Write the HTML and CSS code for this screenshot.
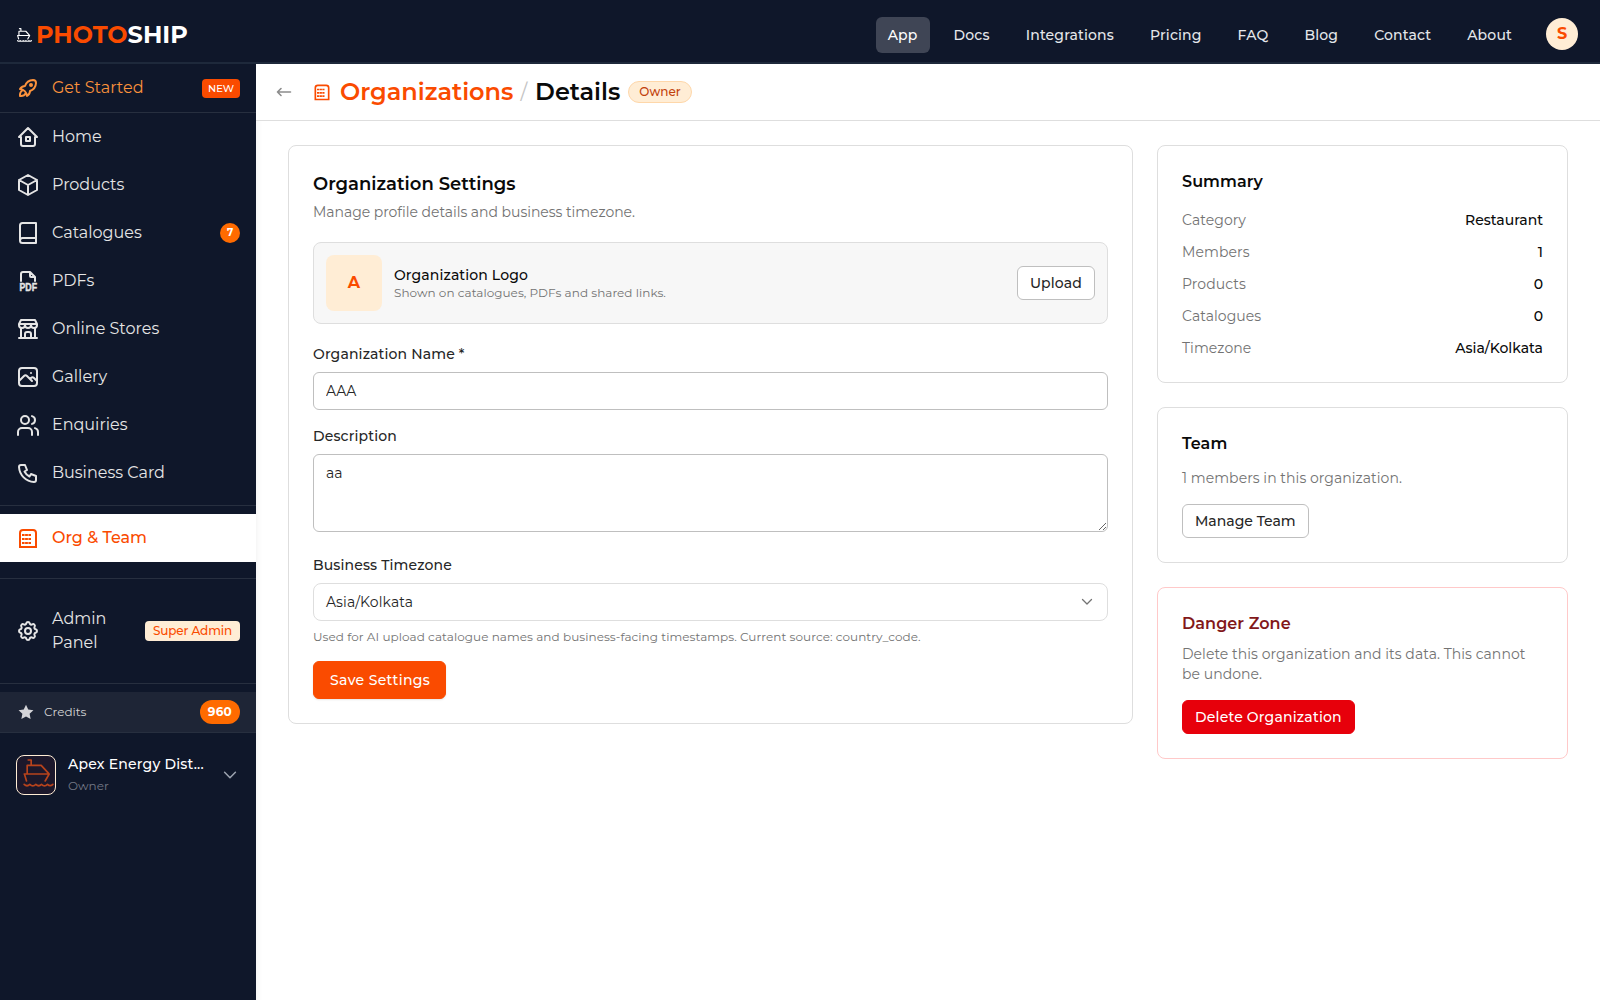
FILE: index.html
```html
<!DOCTYPE html>
<html lang="en">
<head>
    <meta charset="UTF-8">
    <meta name="viewport" content="width=device-width, initial-scale=1.0">
    <title>Organization Details - Photoship</title>
    <link rel="stylesheet" href="styles.css">
</head>
<body>
    <svg class="symbols" width="0" height="0">
        <symbol id="ship" viewBox="0 0 92 84">
            <path d="M15 3h9v16M12 44V19h42l23 25M3 45h75l-12 21M4 46l6 20M3 76c6 6 11 6 17 0 6 6 12 6 18 0 6 6 11 6 17 0 6 6 12 6 18 0 6 6 10 6 16 0"/>
        </symbol>
        <symbol id="building" viewBox="0 0 24 24">
            <path d="M3 21h18M4 21V7a3 3 0 0 1 3-3h10a3 3 0 0 1 3 3v14M6 9h2.600m.5 0h2.800m.5 0H15M6 13h2.600m.5 0h2.800m.5 0H15M6 17h2.600m.5 0h2.800m.5 0H15"/>
        </symbol>
    </svg>

    <header class="topbar">
        <a class="brand">
            <svg class="brand-icon"><use href="#ship"/></svg>
            <span class="brand-name"><span>PHOTO</span>SHIP</span>
        </a>
        <nav class="topnav">
            <a class="active">App</a>
            <a>Docs</a>
            <a>Integrations</a>
            <a>Pricing</a>
            <a>FAQ</a>
            <a>Blog</a>
            <a>Contact</a>
            <a>About</a>
        </nav>
        <div class="avatar">S</div>
    </header>

    <div class="layout">
        <aside class="sidebar">
            <a class="nav-item get-started">
                <svg class="icon" viewBox="0 0 24 24"><path d="M4 13a8 8 0 0 1 7 7 6 6 0 0 0 3-5 9 9 0 0 0 6-8 3 3 0 0 0-3-3 9 9 0 0 0-8 6 6 6 0 0 0-5 3M7 14a6 6 0 0 0-3 6 6 6 0 0 0 6-3"/><circle cx="15" cy="9" r="1"/></svg>
                <span>Get Started</span>
                <span class="tag-new">NEW</span>
            </a>
            <nav class="nav-main">
                <a class="nav-item">
                    <svg class="icon" viewBox="0 0 24 24"><path d="M5 12H3l9-9 9 9h-2M5 12v7a2 2 0 0 0 2 2h10a2 2 0 0 0 2-2v-7M10 12h4v4h-4z"/></svg>
                    <span>Home</span>
                </a>
                <a class="nav-item">
                    <svg class="icon" viewBox="0 0 24 24"><path d="M12 2 21 7v10l-9 5-9-5V7zM3 7l9 5 9-5M12 12v10"/></svg>
                    <span>Products</span>
                </a>
                <a class="nav-item">
                    <svg class="icon" viewBox="0 0 24 24"><path d="M4 19.500V4.500A2.500 2.500 0 0 1 6.500 2H20v20H6.500a2.500 2.500 0 0 1 0-5H20"/></svg>
                    <span>Catalogues</span>
                    <span class="count">7</span>
                </a>
                <a class="nav-item">
                    <svg class="icon" viewBox="0 0 24 24"><path d="M14 3v4a1 1 0 0 0 1 1h4M5 12V5a2 2 0 0 1 2-2h7l5 5v4"/><text x="3.500" y="22" textLength="17.500" lengthAdjust="spacingAndGlyphs">PDF</text></svg>
                    <span>PDFs</span>
                </a>
                <a class="nav-item">
                    <svg class="icon" viewBox="0 0 24 24"><path d="M3 21h18M3 7v1a3 3 0 0 0 6 0V7m0 1a3 3 0 0 0 6 0V7m0 1a3 3 0 0 0 6 0V7H3l2-4h14l2 4M5 21V10.850M19 21V10.850M9 21v-4a2 2 0 0 1 2-2h2a2 2 0 0 1 2 2v4"/></svg>
                    <span>Online Stores</span>
                </a>
                <a class="nav-item">
                    <svg class="icon" viewBox="0 0 24 24"><path d="M15 8h.010M3 6a3 3 0 0 1 3-3h12a3 3 0 0 1 3 3v12a3 3 0 0 1-3 3H6a3 3 0 0 1-3-3zM3 16l5-5c.928-.893 2.072-.893 3 0l5 5M14 14l1-1c.928-.893 2.072-.893 3 0l3 3"/></svg>
                    <span>Gallery</span>
                </a>
                <a class="nav-item">
                    <svg class="icon" viewBox="0 0 24 24"><path d="M16 22v-3a4 4 0 0 0-4-4H6a4 4 0 0 0-4 4v3M22 22v-3a4 4 0 0 0-3-3.870M16 3.130a4 4 0 0 1 0 7.750"/><circle cx="9" cy="7" r="4"/></svg>
                    <span>Enquiries</span>
                </a>
                <a class="nav-item">
                    <svg class="icon" viewBox="0 0 24 24"><path d="M5 4h4l2 5-2.500 1.500a11 11 0 0 0 5 5L15 13l5 2v4a2 2 0 0 1-2 2A16 16 0 0 1 3 6a2 2 0 0 1 2-2"/></svg>
                    <span>Business Card</span>
                </a>
            </nav>
            <nav class="nav-org">
                <a class="nav-item active">
                    <svg class="icon"><use href="#building"/></svg>
                    <span>Org &amp; Team</span>
                </a>
            </nav>
            <div class="nav-admin">
                <a class="nav-item">
                    <svg class="icon" viewBox="0 0 24 24"><path d="M10.325 4.317c.426-1.756 2.924-1.756 3.350 0a1.724 1.724 0 0 0 2.573 1.066c1.543-.940 3.310.826 2.370 2.370a1.724 1.724 0 0 0 1.065 2.572c1.756.426 1.756 2.924 0 3.350a1.724 1.724 0 0 0-1.066 2.573c.940 1.543-.826 3.310-2.370 2.370a1.724 1.724 0 0 0-2.572 1.065c-.426 1.756-2.924 1.756-3.350 0a1.724 1.724 0 0 0-2.573-1.066c-1.543.940-3.310-.826-2.370-2.370a1.724 1.724 0 0 0-1.065-2.572c-1.756-.426-1.756-2.924 0-3.350a1.724 1.724 0 0 0 1.066-2.573c-.940-1.543.826-3.310 2.370-2.370 1 .608 2.296.070 2.572-1.065z"/><circle cx="12" cy="12" r="3"/></svg>
                    <span>Admin Panel</span>
                    <span class="tag-admin">Super Admin</span>
                </a>
            </div>
            <div class="credits">
                <svg class="star" viewBox="0 0 20 20"><path d="m10 1 2.800 6 6.500.8-4.800 4.500 1.300 6.500L10 15.600l-5.800 3.200 1.300-6.500L.7 7.800 7.200 7z"/></svg>
                <span>Credits</span>
                <span class="credits-count">960</span>
            </div>
            <div class="org-switch">
                <div class="org-logo"><svg><use href="#ship"/></svg></div>
                <div class="org-text">
                    <div class="org-name">Apex Energy Dist...</div>
                    <div class="org-role">Owner</div>
                </div>
                <svg class="chevron" viewBox="0 0 20 20"><path d="m4 7 6 6 6-6"/></svg>
            </div>
        </aside>

        <main class="main">
            <div class="page-head">
                <svg class="back" viewBox="0 0 16 16"><path d="M14.500 8h-13M5 4.500 1.500 8 5 11.500"/></svg>
                <h1>
                    <svg class="head-icon"><use href="#building"/></svg>
                    <a>Organizations</a>
                    <span class="slash">/</span>
                    <span>Details</span>
                </h1>
                <span class="role-badge">Owner</span>
            </div>

            <div class="content">
                <section class="card settings">
                    <h2>Organization Settings</h2>
                    <p class="muted">Manage profile details and business timezone.</p>

                    <div class="logo-box">
                        <div class="logo-letter">A</div>
                        <div class="logo-text">
                            <div class="logo-title">Organization Logo</div>
                            <div class="hint">Shown on catalogues, PDFs and shared links.</div>
                        </div>
                        <button class="btn">Upload</button>
                    </div>

                    <label for="org-name">Organization Name *</label>
                    <input type="text" id="org-name" value="AAA">

                    <label for="description">Description</label>
                    <textarea id="description">aa</textarea>

                    <label>Business Timezone</label>
                    <div class="select">
                        <span>Asia/Kolkata</span>
                        <svg viewBox="0 0 16 16"><path d="m3.500 5.500 4.500 4.500 4.500-4.500"/></svg>
                    </div>
                    <p class="hint help">Used for AI upload catalogue names and business-facing timestamps. Current source: country_code.</p>
                    <button class="btn btn-primary">Save Settings</button>
                </section>

                <div class="side">
                    <section class="card">
                        <h3>Summary</h3>
                        <dl>
                            <div><dt>Category</dt><dd>Restaurant</dd></div>
                            <div><dt>Members</dt><dd>1</dd></div>
                            <div><dt>Products</dt><dd>0</dd></div>
                            <div><dt>Catalogues</dt><dd>0</dd></div>
                            <div><dt>Timezone</dt><dd>Asia/Kolkata</dd></div>
                        </dl>
                    </section>
                    <section class="card team">
                        <h3>Team</h3>
                        <p class="muted">1 members in this organization.</p>
                        <button class="btn">Manage Team</button>
                    </section>
                    <section class="card danger">
                        <h3>Danger Zone</h3>
                        <p class="muted">Delete this organization and its data. This cannot be undone.</p>
                        <button class="btn btn-danger">Delete Organization</button>
                    </section>
                </div>
            </div>
        </main>
    </div>
</body>
</html>
```
FILE: styles.css
```css
* {
    box-sizing: border-box;
}
body {
    margin: 0;
    font-family: Montserrat, Inter, sans-serif;
    font-size: 14px;
    line-height: 20px;
    color: #0a0a0a;
    background: #fff;
}
h1, h2, h3, p, dl, dd {
    margin: 0;
}
svg {
    fill: none;
    stroke: currentColor;
    stroke-width: 2;
    stroke-linecap: round;
    stroke-linejoin: round;
    flex-shrink: 0;
}
.symbols {
    position: absolute;
}
#building {
    stroke-linecap: butt;
}

/* top bar */
.topbar {
    display: flex;
    align-items: center;
    height: 64px;
    padding: 0 22px 0 16px;
    background: #0f172a;
    border-bottom: 2px solid #1e293b;
}
.brand {
    display: flex;
    align-items: center;
    gap: 4px;
    color: #fff;
    padding-top: 8px;
}
.brand-icon {
    width: 15px;
    height: 14px;
    stroke-width: 7;
    margin-left: 1px;
}
.brand-name {
    font-size: 24px;
    line-height: 32px;
    font-weight: 700;
}
.brand-name span {
    color: #fa4b00;
}
.topnav {
    display: flex;
    gap: 12px;
    margin-left: auto;
    padding-top: 8px;
}
.topnav a {
    padding: 8px 12px;
    border-radius: 6px;
    font-weight: 500;
    letter-spacing: 0.012em;
    color: #e5e7eb;
}
.topnav .active {
    background: #3f4555;
    color: #fff;
}
.avatar {
    width: 32px;
    height: 32px;
    margin: 6px 0 0 22px;
    border-radius: 50%;
    background: #ffedd5;
    color: #fa4b00;
    font-size: 16px;
    font-weight: 700;
    line-height: 32px;
    text-align: center;
}

/* sidebar */
.layout {
    display: flex;
    height: calc(100vh - 64px);
}
.sidebar {
    width: 256px;
    flex-shrink: 0;
    background: #0f172a;
    color: #e5e5e5;
}
.nav-item {
    display: flex;
    align-items: center;
    gap: 12px;
    padding: 12px 16px;
    font-size: 16px;
    line-height: 24px;
}
.icon {
    width: 24px;
    height: 24px;
}
.icon text {
    font: 700 10.5px "Liberation Sans", sans-serif;
    fill: currentColor;
    stroke-width: 0.4;
}
.get-started {
    color: #fb923c;
    border-bottom: 1px solid #272f3f;
}
.tag-new {
    margin-left: auto;
    padding: 0 6px;
    border-radius: 4px;
    background: #fa4b00;
    color: #fff;
    font-size: 10px;
    font-weight: 500;
    line-height: 19px;
}
.count {
    margin-left: auto;
    width: 20px;
    height: 20px;
    border-radius: 50%;
    background: #ff6b00;
    color: #fff;
    font-size: 10px;
    font-weight: 700;
    line-height: 20px;
    text-align: center;
}
.nav-main {
    padding-bottom: 8px;
    border-bottom: 1px solid #272f3f;
}
.nav-org {
    padding: 8px 0 16px;
    border-bottom: 1px solid #272f3f;
}
.nav-org .active {
    background: #fff;
    color: #fa4b00;
    font-weight: 500;
}
.nav-admin {
    padding: 16px 0;
    border-bottom: 1px solid #272f3f;
}
.tag-admin {
    flex-shrink: 0;
    margin-left: auto;
    padding: 0 8px;
    border-radius: 4px;
    background: #ffedd5;
    color: #fa4b00;
    font-size: 12px;
    font-weight: 500;
    line-height: 20px;
    letter-spacing: -0.01em;
}
.credits {
    display: flex;
    align-items: center;
    margin-top: 8px;
    padding: 8px 16px;
    background: #1e2536;
    border-bottom: 1px solid #272f3f;
    font-size: 12px;
    line-height: 24px;
    color: #d4d4d4;
}
.star {
    width: 16px;
    height: 16px;
    margin: 0 10px 0 2px;
    fill: #d4d4d8;
    stroke: none;
}
.credits-count {
    margin-left: auto;
    padding: 0 8px;
    border-radius: 12px;
    background: #ff6b00;
    color: #fff;
    font-weight: 700;
    letter-spacing: 0.02em;
}
.org-switch {
    display: flex;
    align-items: center;
    gap: 12px;
    padding: 22px 16px;
}
.org-logo {
    display: flex;
    align-items: center;
    justify-content: center;
    width: 40px;
    height: 40px;
    border: 1px solid #ffedd5;
    border-radius: 8px;
    background: #1c182b;
    color: #b8431c;
}
.org-logo svg {
    width: 31px;
    height: 28px;
    stroke-width: 5;
    margin: -5px -4px 0 0;
}
.org-text {
    width: 144px;
    margin: -3px 0 -1px;
}
.org-name {
    color: #fff;
    font-weight: 500;
    line-height: 24px;
    letter-spacing: 0.015em;
    white-space: nowrap;
}
.org-role {
    color: #737885;
    font-size: 12px;
}
.chevron {
    width: 18px;
    height: 18px;
    margin-left: -3px;
    stroke-width: 1.7;
    color: #9ca3af;
}

/* page header */
.main {
    flex: 1;
}
.page-head {
    display: flex;
    align-items: center;
    height: 57px;
    padding: 0 20px;
    border-bottom: 1px solid #dedede;
}
.back {
    width: 16px;
    height: 16px;
    color: #8c8c8c;
    stroke-width: 1.6;
}
h1 {
    display: flex;
    align-items: center;
    gap: 8px;
    margin-left: 20px;
    font-size: 24px;
    line-height: 32px;
    font-weight: 600;
}
h1 a, .head-icon {
    color: #fa4b00;
}
.head-icon {
    width: 20px;
    height: 20px;
}
.slash {
    margin: 0 -1px;
    color: #c4c4c4;
    font-size: 20px;
    font-weight: 400;
}
h1 span:last-child {
    margin-left: 1px;
}
.role-badge {
    margin-left: 8px;
    padding: 0 10px;
    border: 1px solid #fed7aa;
    border-radius: 11px;
    background: #ffedd5;
    color: #c2410c;
    font-size: 12px;
    font-weight: 500;
}

/* cards */
.content {
    display: grid;
    grid-template-columns: 845px 1fr;
    gap: 24px;
    align-items: start;
    height: 879px;
    padding: 24px 32px;
    box-shadow: inset 7px 0 6px -6px rgba(0, 0, 0, 0.06);
}
.card {
    padding: 24px;
    border: 1px solid #dedede;
    border-radius: 8px;
    background: #fff;
}
.side {
    display: grid;
    gap: 24px;
}
h2 {
    font-size: 18px;
    line-height: 28px;
    font-weight: 600;
}
h3 {
    font-size: 16px;
    line-height: 24px;
    font-weight: 600;
    letter-spacing: 0.005em;
}
.muted {
    color: #737373;
}
.hint {
    color: #737373;
    font-size: 12px;
    line-height: 16px;
    letter-spacing: 0.003em;
}
.settings .muted {
    margin-top: 4px;
    letter-spacing: -0.003em;
}
.logo-box {
    display: flex;
    align-items: center;
    gap: 12px;
    margin: 20px 0;
    padding: 12px;
    border: 1px solid #dedede;
    border-radius: 8px;
    background: #f7f7f7;
}
.logo-letter {
    width: 56px;
    height: 56px;
    border-radius: 8px;
    background: #ffedd5;
    color: #fa4b00;
    font-size: 16px;
    font-weight: 700;
    line-height: 56px;
    text-align: center;
}
.logo-title {
    font-weight: 500;
    letter-spacing: 0.008em;
}
.btn {
    height: 34px;
    padding: 0 12px;
    border: 1px solid #bfbfbf;
    border-radius: 6px;
    background: #fff;
    color: #262626;
    font-family: inherit;
    font-size: 14px;
    font-weight: 500;
    line-height: 20px;
}
.logo-box .btn {
    margin-left: auto;
    letter-spacing: 0.01em;
}
.btn-primary {
    height: 38px;
    padding: 0 15px 0 16px;
    border-color: #fa4b00;
    background: #fa4b00;
    color: #fff;
    letter-spacing: 0.025em;
    box-shadow: 0 1px 2px rgba(0, 0, 0, 0.1);
}
.btn-danger {
    border-color: #e7000b;
    background: #e7000b;
    color: #fff;
    letter-spacing: 0.014em;
}
label {
    display: block;
    margin-bottom: 8px;
    font-weight: 500;
    letter-spacing: 0.01em;
    color: #262626;
}
input, textarea, .select {
    display: block;
    width: 100%;
    height: 38px;
    margin-bottom: 16px;
    padding: 8px 12px;
    border: 1px solid #bfbfbf;
    border-radius: 6px;
    background: #fff;
    color: #262626;
    font-family: inherit;
    font-size: 14px;
    line-height: 20px;
}
textarea {
    height: 78px;
    margin-bottom: 23px;
}
.select {
    display: flex;
    align-items: center;
    justify-content: space-between;
    margin-bottom: 8px;
    border-color: #dedede;
    border-radius: 8px;
    letter-spacing: 0.008em;
}
.select svg {
    width: 16px;
    height: 16px;
    stroke-width: 1.3;
    color: #737373;
}
.help {
    margin-bottom: 16px;
    letter-spacing: 0.005em;
}
dl {
    display: grid;
    gap: 12px;
    margin-top: 16px;
}
dl div {
    display: flex;
    justify-content: space-between;
}
dt {
    color: #737373;
    letter-spacing: 0.005em;
}
dd {
    font-weight: 500;
}
.team .muted {
    margin: 12px 0 16px;
    letter-spacing: 0.003em;
}
.danger {
    border-color: #ffc9c9;
}
.danger h3 {
    color: #82181a;
}
.danger .muted {
    margin: 8px 0 16px;
    letter-spacing: 0.003em;
}
```
